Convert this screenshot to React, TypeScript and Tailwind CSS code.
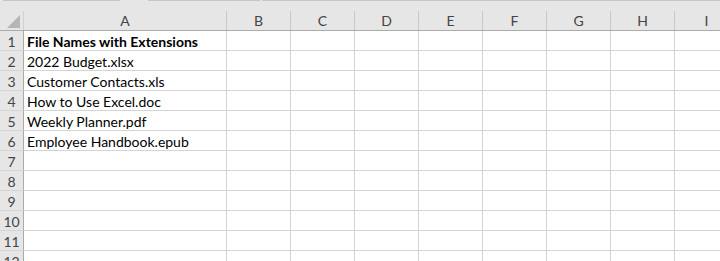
import React from "react";

const cols = ["B", "C", "D", "E", "F", "G", "H", "I"];
const data = [
  "File Names with Extensions",
  "2022 Budget.xlsx",
  "Customer Contacts.xls",
  "How to Use Excel.doc",
  "Weekly Planner.pdf",
  "Employee Handbook.epub",
  "",
  "",
  "",
  "",
  "",
  "",
];

export default function App() {
  return (
    <div
      className="w-[720px] h-[261px] overflow-hidden bg-[#e6e6e6]"
      style={{ fontFamily: "Lato, 'Liberation Sans', sans-serif" }}
    >
      {/* top strip */}
      <div className="h-[11px] flex">
        <div className="w-[3px]" />
        <div className="w-[117px] h-px bg-[#c6c6c6]" />
        <div className="w-[28px]" />
        <div className="w-[112px] h-px bg-[#c6c6c6]" />
        <div className="w-[2px]" />
        <div className="flex-1 h-px bg-[#c6c6c6]" />
      </div>
      {/* header row */}
      <div className="flex h-[20px] border-b border-[#ababab] text-[14px] text-[#444]">
        <div className="w-[24px] shrink-0 border-r border-[#d0d0d0] relative">
          <svg className="absolute right-[3px] bottom-[2px]" width="13" height="13" viewBox="0 0 13 13">
            <polygon points="13,0 13,13 0,13" fill="#b5b5b5" />
          </svg>
        </div>
        <div className="w-[203px] shrink-0 border-r border-[#c8c8c8] flex items-center justify-center leading-none pt-[1px]">A</div>
        {cols.map((c) => (
          <div key={c} className="w-[64px] shrink-0 border-r border-[#c8c8c8] flex items-center justify-center leading-none pt-[1px]">
            {c}
          </div>
        ))}
      </div>
      {/* rows */}
      {data.map((t, i) => (
        <div key={i} className="flex h-[20px] text-[14px]">
          <div className="w-[24px] shrink-0 border-r border-[#ababab] border-b border-b-[#d4d4d4] bg-[#e6e6e6] text-[#444] flex items-center justify-center leading-none pt-[2px]">
            {i + 1}
          </div>
          <div
            className={`w-[203px] shrink-0 bg-white border-r border-b border-[#d4d4d4] pl-[3px] flex items-center leading-none pt-[2px] text-black whitespace-nowrap ${
              i === 0 ? "font-bold" : ""
            }`}
          >
            {t}
          </div>
          {cols.map((c) => (
            <div key={c} className="w-[64px] shrink-0 bg-white border-r border-b border-[#d4d4d4]" />
          ))}
        </div>
      ))}
    </div>
  );
}
